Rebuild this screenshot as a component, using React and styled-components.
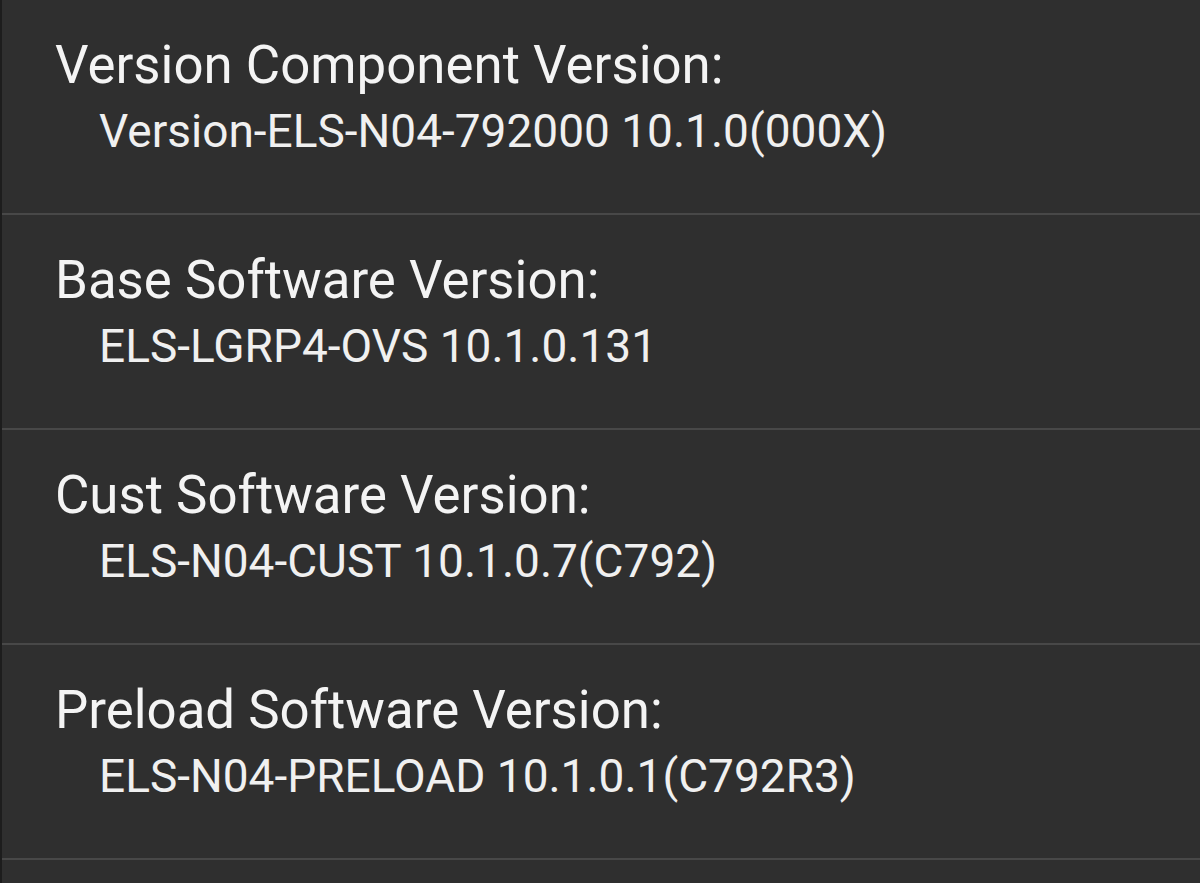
import React from 'react';
import styled, { createGlobalStyle } from 'styled-components';

const GlobalStyle = createGlobalStyle`
  html, body {
    margin: 0;
    padding: 0;
    background: #2f2f2f;
  }
  body {
    font-family: Roboto, "Noto Sans", "Liberation Sans", sans-serif;
    -webkit-font-smoothing: antialiased;
  }
`;

const versions = [
  { title: 'Version Component Version:', value: 'Version-ELS-N04-792000 10.1.0(000X)' },
  { title: 'Base Software Version:', value: 'ELS-LGRP4-OVS 10.1.0.131' },
  { title: 'Cust Software Version:', value: 'ELS-N04-CUST 10.1.0.7(C792)' },
  { title: 'Preload Software Version:', value: 'ELS-N04-PRELOAD 10.1.0.1(C792R3)' },
];

const Screen = styled.div`
  width: 1200px;
  height: 883px;
  overflow: hidden;
  background: #2f2f2f;
  border-left: 2px solid #1d1d1d;
  box-sizing: border-box;
`;

const List = styled.ul`
  list-style: none;
  margin: 0;
  padding: 0;
`;

const Item = styled.li`
  height: 215px;
  box-sizing: border-box;
  padding: 33px 0 0 53px;
  border-bottom: 2px solid #484848;
`;

const Title = styled.div`
  font-size: 52.8px;
  line-height: 64px;
  color: #f4f4f4;
  white-space: nowrap;
`;

const Summary = styled.div`
  margin: 2px 0 0 44px;
  font-size: 46px;
  line-height: 64px;
  color: #f0f0f0;
  white-space: nowrap;
`;

const App = () => (
  <>
    <GlobalStyle />
    <Screen>
      <List>
        {versions.map(v => (
          <Item key={v.title}>
            <Title>{v.title}</Title>
            <Summary>{v.value}</Summary>
          </Item>
        ))}
      </List>
    </Screen>
  </>
);

export default App;
